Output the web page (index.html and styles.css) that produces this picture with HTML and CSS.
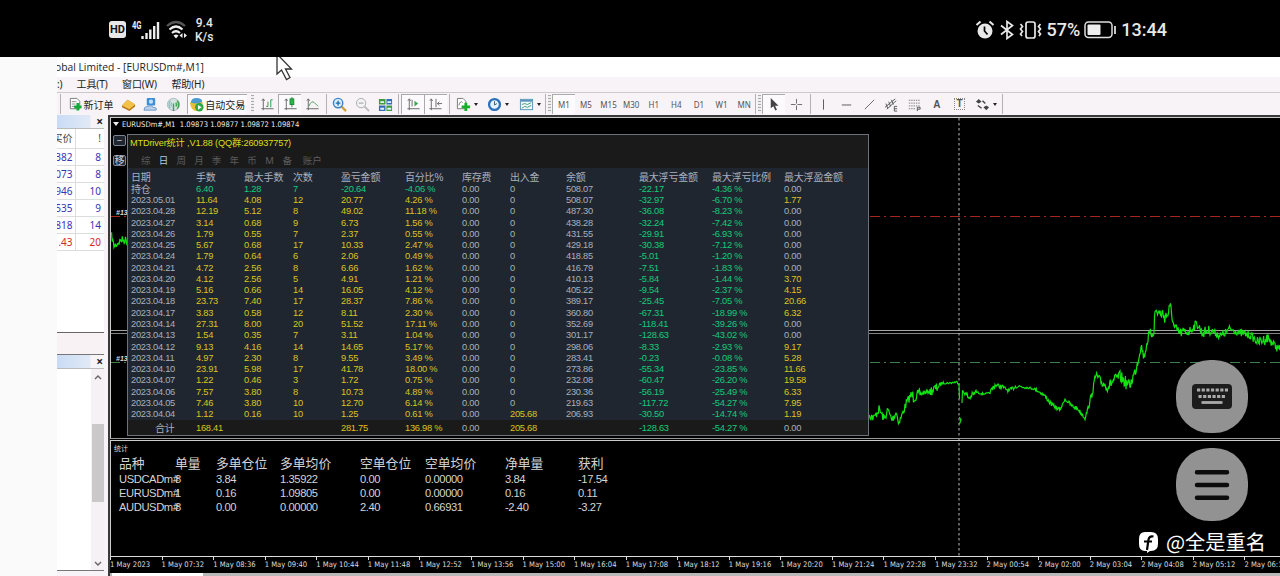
FILE: index.html
```html
<!DOCTYPE html>
<html lang="zh-CN">
<head>
  <meta charset="UTF-8" />
  <title>EURUSDm#,M1</title>
  <link rel="stylesheet" href="styles.css">
</head>
<body>
  <header class="status-bar">
    <div class="status-left">
      <span class="hd">HD</span>
      <svg class="signal" width="30" height="22" viewBox="0 0 30 22">
        <text x="1" y="9.500" class="net" textLength="9.500" lengthAdjust="spacingAndGlyphs">4G</text>
        <path d="M11.500 20v-3M15.500 20v-6M19.300 20v-9.500M23.200 20v-13M27 20V3" stroke="#eee" stroke-width="2.400" />
      </svg>
      <svg class="wifi" width="22" height="20" viewBox="0 0 22 20" fill="none" stroke-width="2.200">
        <path d="M1 6Q10 -2 19 6" stroke="#555" />
        <path d="M3.500 9.500Q10 3.500 16.500 9.500M6 13Q10 9.500 14 13" stroke="#eee" />
        <path d="M7.500 15.500L10 18.500L12.500 15.500Q10 13.500 7.500 15.500zM16.500 13v5l-3-2.500zM18 13v5l3-2.500z" fill="#eee" />
      </svg>
      <span class="speed">9.4<br>K/s</span>
    </div>
    <div class="status-right">
      <svg width="20" height="20" viewBox="0 0 20 20" fill="none">
        <circle cx="10" cy="11" r="7.500" fill="#e8e8e8" />
        <path d="M1.500 5L5.500 1.500M18.500 5L14.500 1.500" stroke="#e8e8e8" stroke-width="2" />
        <path d="M9.500 6.500V11l3 3.500" stroke="#000" stroke-width="1.700" />
      </svg>
      <svg width="14" height="20" viewBox="0 0 14 20" fill="none" stroke="#e8e8e8" stroke-width="1.700">
        <path d="M1 5.500L12.500 14.500L7 18.500V1.500L12.500 5.500L1 14.500" />
      </svg>
      <svg width="23" height="20" viewBox="0 0 23 20" fill="none" stroke="#e8e8e8" stroke-width="1.700">
        <rect x="7" y="2" width="9" height="16" rx="2" />
        <path d="M1.500 4l2 2.500-2 2.500 2 2.500-2 2.500 1.500 2M21.500 4l-2 2.500 2 2.500-2 2.500 2 2.500-1.500 2" />
      </svg>
      <span class="percent">57%</span>
      <svg class="battery" width="33" height="18" viewBox="0 0 33 18">
        <rect x="1" y="1" width="27" height="15.500" rx="3.500" fill="none" stroke="#ddd" stroke-width="1.500" />
        <rect x="3.500" y="3.500" width="13" height="10.500" rx="1" fill="#eee" />
        <path d="M31 5v8" stroke="#ddd" stroke-width="1.800" />
      </svg>
      <span class="clock">13:44</span>
    </div>
  </header>

  <div class="desktop">
    <main class="terminal">
      <div class="title-bar"><span>obal Limited - [EURUSDm#,M1]</span></div>
      <nav class="menu-bar">
        <span class="menu-cut">:)</span><span>工具(T)</span><span>窗口(W)</span><span>帮助(H)</span>
      </nav>
      <div class="toolbar">
        <i class="sep first"></i>
        <span class="tool order">
          <svg viewBox="0 0 16 16"><path d="M2.500 1.500h7l3 3v8h-10z" fill="#fff" stroke="#777" /><path d="M4 5h5M4 7.500h4M4 10h3" stroke="#888" /><path d="M10.500 6.500v8M6.500 10.500h8" stroke="#18a838" stroke-width="3" /></svg>
          新订单
        </span>
        <span class="tool"><svg viewBox="0 0 16 16"><path d="M1 9l6-6 8 5v2l-6 5-8-4z" fill="#b87818" /><path d="M1 9l6-6 8 5-6 5z" fill="#f2c14a" /></svg></span>
        <span class="tool"><svg viewBox="0 0 16 16"><rect x="4" y="1" width="9" height="8" rx="1" fill="#3e8ed8" /><circle cx="8.500" cy="5" r="2.300" fill="#bfe2fa" /><path d="M1 14q0-4 4-4 4-2 6 1 4 0 3 3z" fill="#bcd2ea" stroke="#6a96c8" /></svg></span>
        <span class="tool"><svg viewBox="0 0 16 16" fill="none"><circle cx="8" cy="8" r="6.500" fill="#d5e3e3" stroke="#a3b8bc" /><path d="M4.500 12Q1.500 8 4.500 4M6 10Q4.500 8 6 6" stroke="#7aa" /><path d="M8 15V7M10.500 10q1.500-2 0-4M12 12.500q3-4 0-8.500" stroke="#3aa54a" stroke-width="1.500" /></svg></span>
        <span class="tool auto pressed">
          <svg viewBox="0 0 16 16"><path d="M1 6l7-4 7 4-6 9q-7 0-8-9z" fill="#e8bd38" /><path d="M2 6q0-5 6-5t6 4q-5 3-12 1z" fill="#4b9bd0" /><circle cx="11" cy="11" r="4.500" fill="#2da840" /><path d="M9.500 8.500v5l4-2.500z" fill="#fff" /></svg>
          自动交易
        </span>
        <i class="grip"></i>
        <span class="tool"><svg viewBox="0 0 16 16" fill="none" stroke="#666"><path d="M3.500 2v12M1.500 12.500h13M2 4l1.500-2L5 4" /><path d="M6.500 10h2V5M11.500 11V3h2" stroke="#2a9a40" /></svg></span>
        <span class="tool pressed"><svg viewBox="0 0 16 16" fill="none" stroke="#666"><path d="M3.500 2v12M1.500 12.500h13M2 4l1.500-2L5 4M9.500 0v11" /><rect x="7.500" y="2" width="4" height="6" fill="#28b848" stroke="#188830" /></svg></span>
        <span class="tool"><svg viewBox="0 0 16 16" fill="none" stroke="#666"><path d="M3.500 2v12M1.500 12.500h13M2 4l1.500-2L5 4" /><path d="M4 10q3-7 6-4l4 4" stroke="#4ba060" /></svg></span>
        <i class="sep"></i>
        <span class="tool"><svg viewBox="0 0 16 16" fill="none"><path d="M10 10l5 5" stroke="#d0a040" stroke-width="2.500" /><circle cx="6.500" cy="6.500" r="5" fill="#d9efff" stroke="#3c83c6" stroke-width="1.500" /><path d="M6.500 4v5M4 6.500h5" stroke="#226bb3" stroke-width="1.500" /></svg></span>
        <span class="tool"><svg viewBox="0 0 16 16" fill="none"><path d="M10 10l5 5" stroke="#bbb" stroke-width="2" /><circle cx="6.500" cy="6.500" r="5" fill="#f2f2f2" stroke="#aaa" /><path d="M4 6.500h5" stroke="#999" /></svg></span>
        <span class="tool"><svg viewBox="0 0 16 16"><path d="M1 2h7v6H1zM9 9h6v6H9z" fill="#3b9c3c" /><path d="M9 2h6v6H9zM1 9h7v6H1z" fill="#326fbb" /><path d="M2.500 4.500h4v2h-4zM10 4.500h4v2h-4zM2.500 11.500h4v2h-4zM10 11.500h4v2h-4z" fill="#e4f4ff" /></svg></span>
        <i class="sep"></i>
        <span class="tool pressed"><svg viewBox="0 0 16 16" fill="none" stroke="#666"><path d="M3.500 2v12M1.500 12.500h13M2 4l1.500-2L5 4M6.500 3v7" /><path d="M9 4v6l4-3z" fill="#3aaa4e" stroke="none" /></svg></span>
        <span class="tool pressed"><svg viewBox="0 0 16 16" fill="none" stroke="#666"><path d="M3.500 2v12M1.500 12.500h13M2 4l1.500-2L5 4M8.500 2v9M15 7h-5M12 5l-2 2 2 2" /></svg></span>
        <i class="sep"></i>
        <span class="tool drop"><svg viewBox="0 0 16 16"><path d="M1.500 1.500h6l3 3v8h-9z" fill="#fff" stroke="#777" /><path d="M3 9q2-6 4-3" fill="none" stroke="#777" /><path d="M10.500 6v9M6 10.500h9" stroke="#16ad28" stroke-width="3" /></svg><b></b></span>
        <span class="tool drop"><svg viewBox="0 0 16 16"><circle cx="8" cy="8" r="5.800" fill="#e2f2ff" stroke="#2c6eb8" stroke-width="2.400" /><path d="M8 4.500V8.500L10.500 7" fill="none" stroke="#456" /></svg><b></b></span>
        <span class="tool drop"><svg viewBox="0 0 16 16"><rect x="1.500" y="2.500" width="13" height="11" fill="#eff7fb" stroke="#5a92b8" /><path d="M2 4h12" stroke="#5a92b8" stroke-width="2" /><path d="M3 8l3-1 3 1 4-2M3 12l3-2 3 1 4-2" fill="none" stroke="#489a76" /></svg><b></b></span>
        <i class="sep thin"></i><i class="grip tight"></i>
        <span class="tool tf pressed">M1</span><span class="tool tf">M5</span><span class="tool tf">M15</span><span class="tool tf">M30</span><span class="tool tf">H1</span><span class="tool tf">H4</span><span class="tool tf">D1</span><span class="tool tf">W1</span><span class="tool tf">MN</span>
        <i class="sep thin"></i><i class="grip tight"></i>
        <span class="tool pressed"><svg viewBox="0 0 16 16"><path d="M4 1v11l2.800-2.200 2 4.500 1.800-.8-2-4.200h3.700z" fill="#444" /></svg></span>
        <span class="tool"><svg viewBox="0 0 16 16" stroke="#666"><path d="M8 2v5M8 9v5M2 8h5M9 8h5" /></svg></span>
        <i class="sep"></i>
        <span class="tool"><svg viewBox="0 0 16 16" stroke="#555"><path d="M8 2.500v11" /></svg></span>
        <span class="tool"><svg viewBox="0 0 16 16" stroke="#555"><path d="M3 8.500h10" /></svg></span>
        <span class="tool"><svg viewBox="0 0 16 16" stroke="#666"><path d="M3 13L13 3" /></svg></span>
        <span class="tool"><svg viewBox="0 0 16 16" fill="none" stroke="#555"><path d="M1 11l11-9M3 13l10-9M2 7l2 5M5 5l2 5M8 3l2 5" /><path d="M14 10h-3v5h3M11 12.500h3" /></svg></span>
        <span class="tool"><svg viewBox="0 0 16 16" fill="none" stroke="#777"><path d="M2 3.500h12M2 6.500h12M2 9.500h12M2 12.500h7" stroke-dasharray="1.500 1" /><path d="M11 15v-4h3v2h-3" stroke="#555" /></svg></span>
        <span class="tool letter">A</span>
        <span class="tool letter"><span class="boxed">T</span></span>
        <span class="tool drop"><svg viewBox="0 0 16 16" fill="#444"><path d="M1 5l3-3 3 3-3 2zM9 11l3-2 3 2-3 3z" /><path d="M3 9l4 3M8 4l3 3" stroke="#444" stroke-width="1.500" /></svg><b></b></span>
        <i class="sep thin"></i>
      </div>

      <div class="workspace">
        <aside class="dock">
          <div class="dock-head">×</div>
          <table class="quotes">
            <tr class="quotes-head"><td>买价</td><td>!</td></tr>
            <tr><td>382</td><td>8</td></tr>
            <tr><td>073</td><td>8</td></tr>
            <tr><td>946</td><td>10</td></tr>
            <tr><td>535</td><td>9</td></tr>
            <tr><td>818</td><td>14</td></tr>
            <tr class="down"><td>1.43</td><td>20</td></tr>
          </table>
          <div class="dock-tabs"></div>
          <div class="dock-head">×</div>
          <div class="navigator">
            <div class="scrollbar">
              <svg width="8" height="5" viewBox="0 0 8 5"><path d="M1 4l3-3 3 3" /></svg>
              <div class="thumb"></div>
              <svg width="8" height="5" viewBox="0 0 8 5"><path d="M1 1l3 3 3-3" /></svg>
            </div>
          </div>
        </aside>

        <section class="chart">
          <svg class="plot" width="1170" height="440" viewBox="110 117 1170 440" fill="none">
            <path d="M110 216.500H1280" stroke="#a5261f" stroke-dasharray="10 4 2 4" />
            <path d="M110 362.500H1280" stroke="#3f7d4b" stroke-dasharray="10 4 2 4" />
            <path d="M110 330.500H1280" stroke="#a4a4a4" />
            <path d="M110 333.500H1280" stroke="#858585" />
            <path d="M959 118V557" stroke="#bbb" stroke-dasharray="2.500 2.500" />
            <path id="price" stroke="#12e412" stroke-width="1.200" />
            <text x="116" y="215">#13</text>
            <text x="116" y="361">#13</text>
          </svg>
          <div class="pane main-pane">
            <div class="symbol-line">EURUSDm#,M1&nbsp; 1.09873 1.09877 1.09872 1.09874</div>
            <div class="panel-area">
              <div class="panel-buttons"><span>−</span><span>移</span></div>
              <div class="stats">
                <div class="stats-title">MTDriver统计 ,V1.88 (QQ群:260937757)</div>
                <div class="tabs"><span>综</span><span class="on">日</span><span>周</span><span>月</span><span>季</span><span>年</span><span>币</span><span>M</span><span>备</span><span class="wide">账户</span></div>
                <div class="grid" id="daily"></div>
              </div>
            </div>
          </div>
          <div class="pane sub-pane">
            <div class="sub-title">统计</div>
            <div class="positions" id="positions"></div>
          </div>
          <div class="axis" id="axis"></div>
          <div class="chart-tabs"><span></span></div>
        </section>
      </div>
    </main>
  </div>

  <svg class="cursor" width="20" height="25" viewBox="0 0 20 25"><path d="M2 -3V17l4.500-4 5 9.500 3.500-2-4.500-8.500h6z" fill="#fff" stroke="#333" stroke-width="1.300" /></svg>

  <div class="float-buttons">
    <div class="float-button">
      <svg width="40" height="25" viewBox="0 0 40 25"><rect width="40" height="25" rx="4" fill="#1c1c1c" /><path d="M5 6h31" stroke="#aaa" stroke-width="3" stroke-dasharray="3.200 1.450" /><path d="M6.500 12.500h27" stroke="#aaa" stroke-width="3" stroke-dasharray="3.200 1.450" /><path d="M9.500 18.500h21" stroke="#aaa" stroke-width="2.800" /></svg>
    </div>
    <div class="float-button">
      <svg width="36" height="32" viewBox="0 0 36 32"><path d="M3 3.200h30M3 16h30M3 28.800h30" stroke="#0c0c0c" stroke-width="4.500" stroke-linecap="round" /></svg>
    </div>
  </div>
  <div class="watermark">
    <svg width="21" height="23" viewBox="0 0 21 23"><path d="M7 1h6q7 0 7 7v5q0 7-7 7h-1l-3 2v-2H7q-6 0-6-7V8q0-7 6-7z" fill="#fff" /><path d="M15.500 5.500q-4-1-5 3L9 19M6 10.500h8" fill="none" stroke="#000" stroke-width="2.200" /></svg>
    <span>@全是重名</span>
  </div>

  <script src="script.js"></script>
</body>
</html>
```

FILE: styles.css
```css
* {
  margin: 0;
  padding: 0;
  box-sizing: border-box;
}

body {
  width: 1280px;
  height: 576px;
  overflow: hidden;
  position: relative;
  display: flex;
  flex-direction: column;
  background: #fafafa;
  font-family: "Noto Sans", "Noto Sans CJK SC", sans-serif;
}

svg {
  display: block;
  flex: none;
}

/* phone status bar */
.status-bar {
  height: 57px;
  flex: none;
  background: #000;
  color: #e8e8e8;
  display: flex;
  justify-content: space-between;
  padding: 2px 113px 0 109px;
  font-family: Roboto, sans-serif;
}

.status-left,
.status-right {
  display: flex;
  align-items: center;
}

.hd {
  width: 17px;
  height: 17px;
  border-radius: 3px;
  background: #e8e8e8;
  color: #111;
  font-size: 11px;
  line-height: 17px;
  font-weight: 700;
  text-align: center;
}

.signal {
  margin-left: 5px;
}

.net {
  font: 700 10px Roboto, sans-serif;
  fill: #eee;
}

.wifi {
  margin-left: 5px;
}

.speed {
  margin-left: 7px;
  font-size: 12px;
  line-height: 14px;
  text-align: center;
  font-weight: 500;
}

.status-right svg {
  margin-right: 5px;
}

.status-right .battery {
  margin-right: 4px;
}

.percent,
.clock {
  font-size: 18px;
  font-weight: 500;
}

.percent {
  margin-right: 4px;
}

/* terminal window */
.desktop {
  flex: 1;
  min-height: 0;
  display: flex;
  padding-left: 57px;
}

.terminal {
  flex: 1;
  min-width: 0;
  display: flex;
  flex-direction: column;
  overflow: hidden;
  background: #f7f3f6;
  color: #222;
}

.title-bar {
  height: 20px;
  background: #fff;
  font: 10.3px/20px "Open Sans", sans-serif;
  white-space: nowrap;
}

.title-bar span {
  margin-left: -2px;
}

.menu-bar {
  height: 15px;
  display: flex;
  gap: 14.5px;
  font-size: 10px;
  line-height: 15px;
  letter-spacing: -0.1px;
}

.menu-bar .menu-cut {
  width: 5px;
}

.toolbar {
  height: 23px;
  border-top: 1px solid #ccc8cc;
  display: flex;
  align-items: center;
  font-size: 10px;
}

.tool {
  width: 22.6px;
  height: 20px;
  flex: none;
  display: flex;
  align-items: center;
  justify-content: center;
  white-space: nowrap;
}

.tool svg {
  width: 15px;
  height: 15px;
}

.tool.pressed {
  background: #fcfafc;
  border-top: 1px solid #aaa;
  border-left: 1px solid #aaa;
}

.order {
  width: 53px;
  gap: 1px;
}

.auto {
  width: 60px;
  margin: 0 2px;
  gap: 1px;
}

.drop {
  width: 31.2px;
  gap: 3px;
}

.drop b {
  border: 2.5px solid transparent;
  border-top: 3px solid #222;
  border-bottom: 0;
}

.tf {
  font-size: 8px;
  color: #555;
}

.letter {
  font: 700 10px "Liberation Sans", sans-serif;
  color: #555;
}

.boxed {
  width: 11px;
  line-height: 10px;
  text-align: center;
  border: 1px dotted #888;
}

.sep {
  width: 1px;
  height: 20px;
  flex: none;
  margin: 0 2px;
  background: #b5b0b5;
}

.sep.first {
  margin: 0 3px;
}

.sep.thin {
  margin: 0;
}

.grip {
  width: 3px;
  height: 18px;
  flex: none;
  margin: 0 2px;
  background: repeating-linear-gradient(#aaa 0 1px, #eee 1px 3px);
}

.grip.tight {
  margin: 0 1.5px;
}

.workspace {
  flex: 1;
  min-height: 0;
  display: flex;
}

/* left dock */
.dock {
  width: 51px;
  flex: none;
  padding-right: 4px;
  display: flex;
  flex-direction: column;
  overflow: hidden;
}

.dock-head {
  height: 14px;
  flex: none;
  background: linear-gradient(90deg, #c9dcf5, #e1e9f6 70%, #f7f3f6 72%);
  border-bottom: 1px solid #bbb;
  font-size: 12px;
  font-weight: 700;
  line-height: 13px;
  text-align: right;
  padding-right: 1px;
}

.quotes {
  flex: none;
  width: 47px;
  table-layout: fixed;
  border-collapse: collapse;
  background: #fff;
  font-size: 10px;
  line-height: 16px;
  color: #3434b4;
}

.quotes td {
  height: 17px;
  border-bottom: 1px solid #ddd;
  text-align: right;
  padding-right: 3px;
  overflow: hidden;
  white-space: nowrap;
  direction: rtl;
}

.quotes td:first-child {
  width: 18px;
  border-right: 1px solid #ddd;
  padding-right: 2px;
}

.quotes .quotes-head td {
  height: 19px;
  color: #444;
}

.quotes .down td {
  color: #d22828;
}

.dock-tabs {
  flex: none;
  height: 104px;
  border-bottom: 1px solid #777;
  background: linear-gradient(#fff 81px, #666 81px 82px, #f8f2f5 82px);
}

.navigator {
  height: 202px;
  flex: none;
  background: #fff;
  border-bottom: 1px solid #777;
  display: flex;
  justify-content: flex-end;
}

.scrollbar {
  width: 13px;
  background: #f6f1f4;
  display: flex;
  flex-direction: column;
  align-items: center;
  justify-content: space-between;
  padding: 6px 0 4px;
}

.scrollbar path {
  fill: none;
  stroke: #666;
  stroke-width: 1.4;
}

.thumb {
  width: 12px;
  height: 78px;
  margin-top: 21px;
  margin-bottom: 36px;
  background: #cbc8ca;
}

/* chart */
.chart {
  flex: 1;
  min-width: 0;
  position: relative;
  display: flex;
  flex-direction: column;
  background: #000;
  border-left: 2px solid #3a3a3a;
  border-top: 2px solid #3a3a3a;
}

.plot {
  position: absolute;
  left: 0;
  top: 0;
}

.plot text {
  font: italic 700 7px "Liberation Sans", sans-serif;
  fill: #ddd;
}

.pane {
  position: relative;
  border-top: 1px solid #ccc;
  border-left: 1px solid #ccc;
  flex: none;
}

.main-pane {
  height: 322px;
  border-bottom: 1px solid #999;
}

.sub-pane {
  margin-top: 1px;
  height: 117px;
  border-bottom: 1px solid #ddd;
}

.symbol-line {
  height: 16px;
  padding-left: 2px;
  font: 7.6px/13px "DejaVu Sans Condensed", sans-serif;
  color: #eee;
  white-space: pre;
}

.symbol-line::before {
  content: "";
  display: inline-block;
  border: 3px solid transparent;
  border-top: 4px solid #eee;
  border-bottom: 0;
  margin-right: 3px;
  vertical-align: 1px;
}

.panel-area {
  display: flex;
}

.panel-buttons {
  width: 16px;
  padding: 1px 0 0 2px;
  display: flex;
  flex-direction: column;
  gap: 9px;
}

.panel-buttons span {
  width: 13px;
  height: 11px;
  border: 1px solid #7a8594;
  border-radius: 2px;
  background: #202630;
  color: #c8ced8;
  font-size: 10px;
  line-height: 9px;
  text-align: center;
}

.stats {
  width: 742px;
  height: 302px;
  border: 1px solid #6c717a;
  background: #1a1a1a;
}

.stats-title {
  height: 17px;
  padding-left: 2px;
  font: 9.2px/17px "Liberation Sans", "Noto Sans CJK SC", sans-serif;
  letter-spacing: -0.15px;
  color: #dede18;
}

.tabs {
  height: 16px;
  padding-left: 9px;
  display: flex;
  font-size: 9.5px;
  line-height: 17px;
  color: #5c5c5c;
}

.tabs span {
  width: 17.7px;
  text-align: center;
}

.tabs .wide {
  width: 32px;
}

.tabs .on {
  color: #b4cbe4;
}

.grid {
  background: #202630;
  color: #a9b0bd;
  font: 9.3px/11.27px "Liberation Sans", "Noto Sans CJK SC", sans-serif;
  letter-spacing: -0.25px;
}

.row {
  height: 11.27px;
  padding-left: 3px;
  display: grid;
  grid-template-columns: 65px 48px 49px 48px 64px 57px 48px 56px 73px 73px 72px 80px;
  white-space: nowrap;
}

.row.head {
  height: 15.8px;
  line-height: 20px;
  font-size: 10px;
  letter-spacing: -0.2px;
}

.row .cjk {
  font-size: 10px;
  letter-spacing: -0.2px;
}

.row.total {
  height: 15px;
  line-height: 17px;
  background: #1a1a1a;
}

.row.total .cjk {
  padding-left: 24px;
}

.up {
  color: #dcc41c;
}

.neg {
  color: #12cc7a;
}

.sub-title {
  height: 14px;
  padding: 2px 0 0 3px;
  font-size: 7px;
  line-height: 11px;
  color: #ddd;
}

.positions {
  padding-top: 1px;
  color: #d4d4d4;
  font: 11.2px/14.4px "Liberation Sans", "Noto Sans CJK SC", sans-serif;
  letter-spacing: -0.4px;
}

.position {
  height: 14.4px;
  padding-left: 8px;
  display: grid;
  grid-template-columns: 56px 41px 64px 80px 65px 80px 73px 60px;
  white-space: nowrap;
}

.position.head {
  height: 15.5px;
  line-height: 15px;
  font-size: 12.8px;
  letter-spacing: 0;
}

.axis {
  height: 16px;
  display: flex;
  color: #ddd;
  font: 7.6px/14px "DejaVu Sans Condensed", sans-serif;
}

.axis span {
  width: 51.57px;
  flex: none;
  padding-top: 1px;
  white-space: nowrap;
  background: linear-gradient(#ddd, #ddd) 0 0 / 1px 3px no-repeat;
}

.chart-tabs {
  flex: 1;
  background: #b8b8b8;
}

.chart-tabs span {
  display: block;
  width: 91px;
  height: 3px;
  margin-left: 2px;
  background: #fff;
}

/* overlays */
.cursor {
  position: absolute;
  left: 275px;
  top: 57px;
}

.float-buttons {
  position: absolute;
  left: 1176px;
  top: 360px;
  display: flex;
  flex-direction: column;
  gap: 15px;
}

.float-button {
  width: 72px;
  height: 73px;
  border-radius: 34px;
  background: #929292;
  display: flex;
  align-items: center;
  justify-content: center;
}

.watermark {
  position: absolute;
  left: 1138px;
  top: 530px;
  display: flex;
  align-items: center;
  gap: 7px;
  color: #fff;
  font: 20.2px/24px "Noto Sans CJK SC", sans-serif;
  white-space: nowrap;
}
```

FILE: script.js
```js
const dailyHead = ['日期', '手数', '最大手数', '次数', '盈亏金额', '百分比%', '库存费', '出入金', '余额', '最大浮亏金额', '最大浮亏比例', '最大浮盈金额']

// date, lots, max lots, count, profit, percent, swap, deposit, balance, max loss, max loss %, max float profit
const daily = `
持仓|6.40|1.28|7|-20.64|-4.06 %|0.00|0|508.07|-22.17|-4.36 %|0.00
2023.05.01|11.64|4.08|12|20.77|4.26 %|0.00|0|508.07|-32.97|-6.70 %|1.77
2023.04.28|12.19|5.12|8|49.02|11.18 %|0.00|0|487.30|-36.08|-8.23 %|0.00
2023.04.27|3.14|0.68|9|6.73|1.56 %|0.00|0|438.28|-32.24|-7.42 %|0.00
2023.04.26|1.79|0.55|7|2.37|0.55 %|0.00|0|431.55|-29.91|-6.93 %|0.00
2023.04.25|5.67|0.68|17|10.33|2.47 %|0.00|0|429.18|-30.38|-7.12 %|0.00
2023.04.24|1.79|0.64|6|2.06|0.49 %|0.00|0|418.85|-5.01|-1.20 %|0.00
2023.04.21|4.72|2.56|8|6.66|1.62 %|0.00|0|416.79|-7.51|-1.83 %|0.00
2023.04.20|4.12|2.56|5|4.91|1.21 %|0.00|0|410.13|-5.84|-1.44 %|3.70
2023.04.19|5.16|0.66|14|16.05|4.12 %|0.00|0|405.22|-9.54|-2.37 %|4.15
2023.04.18|23.73|7.40|17|28.37|7.86 %|0.00|0|389.17|-25.45|-7.05 %|20.66
2023.04.17|3.83|0.58|12|8.11|2.30 %|0.00|0|360.80|-67.31|-18.99 %|6.32
2023.04.14|27.31|8.00|20|51.52|17.11 %|0.00|0|352.69|-118.41|-39.26 %|0.00
2023.04.13|1.54|0.35|7|3.11|1.04 %|0.00|0|301.17|-128.63|-43.02 %|0.00
2023.04.12|9.13|4.16|14|14.65|5.17 %|0.00|0|298.06|-8.33|-2.93 %|9.17
2023.04.11|4.97|2.30|8|9.55|3.49 %|0.00|0|283.41|-0.23|-0.08 %|5.28
2023.04.10|23.91|5.98|17|41.78|18.00 %|0.00|0|273.86|-55.34|-23.85 %|11.66
2023.04.07|1.22|0.46|3|1.72|0.75 %|0.00|0|232.08|-60.47|-26.20 %|19.58
2023.04.06|7.57|3.80|8|10.73|4.89 %|0.00|0|230.36|-56.19|-25.49 %|6.33
2023.04.05|7.46|3.80|10|12.70|6.14 %|0.00|0|219.63|-117.72|-54.27 %|7.95
2023.04.04|1.12|0.16|10|1.25|0.61 %|0.00|205.68|206.93|-30.50|-14.74 %|1.19
合计|168.41|||281.75|136.98 %|0.00|205.68||-128.63|-54.27 %|0.00`.trim().split('\n').map(line => line.split('|'))

const cellClass = (row, value, col) => {
  if (col === 0) return /\d/.test(value) ? '' : 'cjk'
  if (col === 8 || parseFloat(value) === 0) return ''
  if (value.startsWith('-')) return (row[0] === '持仓' && col === 4) ? 'neg' : 'neg'
  return row[0] === '持仓' ? 'neg' : 'up'
}

const renderDaily = () => {
  const head = `<div class="row head">${dailyHead.map(h => `<span>${h}</span>`).join('')}</div>`
  const rows = daily.map(row => {
    const cells = row.map((v, i) => `<span class="${cellClass(row, v, i)}">${v}</span>`).join('')
    return `<div class="row ${row[0] === '合计' ? 'total' : ''}">${cells}</div>`
  })
  document.getElementById('daily').innerHTML = head + rows.join('')
}

const positions = [
  ['品种', '单量', '多单仓位', '多单均价', '空单仓位', '空单均价', '净单量', '获利'],
  ['USDCADm#', '8', '3.84', '1.35922', '0.00', '0.00000', '3.84', '-17.54'],
  ['EURUSDm#', '1', '0.16', '1.09805', '0.00', '0.00000', '0.16', '0.11'],
  ['AUDUSDm#', '8', '0.00', '0.00000', '2.40', '0.66931', '-2.40', '-3.27']
]

const renderPositions = () => {
  document.getElementById('positions').innerHTML = positions.map((row, i) =>
    `<div class="position ${i ? '' : 'head'}">${row.map(v => `<span>${v}</span>`).join('')}</div>`
  ).join('')
}

const times = ['1 May 2023', '1 May 07:32', '1 May 08:36', '1 May 09:40', '1 May 10:44', '1 May 11:48', '1 May 12:52', '1 May 13:56',
  '1 May 15:00', '1 May 16:04', '1 May 17:08', '1 May 18:12', '1 May 19:16', '1 May 20:20', '1 May 21:24', '1 May 22:28',
  '1 May 23:32', '2 May 00:54', '2 May 02:00', '2 May 03:04', '2 May 04:08', '2 May 05:12', '2 May 06:16']

const renderAxis = () => {
  document.getElementById('axis').innerHTML = times.map(t => `<span>${t}</span>`).join('')
}

// x, y, tick noise up to the next point
const segments = [
  [[111, 234, 3], [114, 246, 4], [118, 243, 3], [121, 240, 4], [128, 240, 2]],
  [[869, 415, 4], [874, 418, 4], [879, 409, 4], [884, 419, 4], [888, 410, 3], [892, 420, 4], [896, 412, 3], [899, 423, 3],
   [903, 412, 4], [907, 402, 4], [911, 395, 6], [914, 397, 5], [920, 394, 2], [930, 391, 5], [937, 388, 2], [942, 383, 1],
   [950, 383, 1], [957, 382, 1], [959, 384, 1], [959.5, 398, 1]],
  [[959.5, 417, 1], [961, 420, 1], [959.5, 424, 0]],
  [[962, 403, 1], [962.5, 391, 2], [966, 394, 3], [969, 398, 3], [976, 392, 1], [983, 394, 0.6], [990, 393, 3], [995, 385, 2],
   [1003, 387, 1.5], [1009, 391, 2], [1016, 386, 2], [1025, 387, 1], [1035, 389, 1.5], [1044, 395, 2], [1052, 405, 2],
   [1060, 410, 1], [1065, 399, 2], [1072, 406, 2], [1078, 409, 2], [1085, 418, 2], [1090, 402, 4], [1096, 375, 4],
   [1101, 382, 5], [1108, 387, 5], [1114, 380, 5], [1120, 376, 6], [1126, 383, 5], [1130, 385, 5], [1136, 369, 5],
   [1139, 355, 5], [1141, 345, 5], [1144, 357, 5], [1148, 338, 6], [1154, 330, 6], [1155, 311, 5], [1162, 314, 8],
   [1166, 316, 8], [1171, 309, 5], [1174, 328, 5], [1180, 333, 5], [1190, 331, 4], [1197, 323, 5], [1202, 333, 5],
   [1210, 330, 4], [1221, 336, 4], [1230, 329, 3], [1240, 333, 4], [1250, 335, 4], [1258, 342, 5], [1268, 338, 4],
   [1275, 346, 4], [1281, 350, 2]]
]

let seed = 7
const random = () => {
  seed = (seed * 16807) % 2147483647
  return seed / 2147483647 - 0.5
}

const renderPrice = () => {
  let d = ''
  segments.forEach(points => {
    d += `M${points[0][0]} ${points[0][1]}`
    for (let i = 1; i < points.length; i++) {
      const [x0, y0, noise] = points[i - 1]
      const [x1, y1] = points[i]
      const steps = Math.max(1, Math.round((x1 - x0) * 1.6))
      for (let s = 1; s <= steps; s++) {
        const x = x0 + (x1 - x0) * s / steps
        const y = y0 + (y1 - y0) * s / steps + random() * noise * 2.1
        d += `L${x.toFixed(1)} ${y.toFixed(1)}`
      }
    }
  })
  document.getElementById('price').setAttribute('d', d)
}

renderDaily()
renderPositions()
renderAxis()
renderPrice()
```
